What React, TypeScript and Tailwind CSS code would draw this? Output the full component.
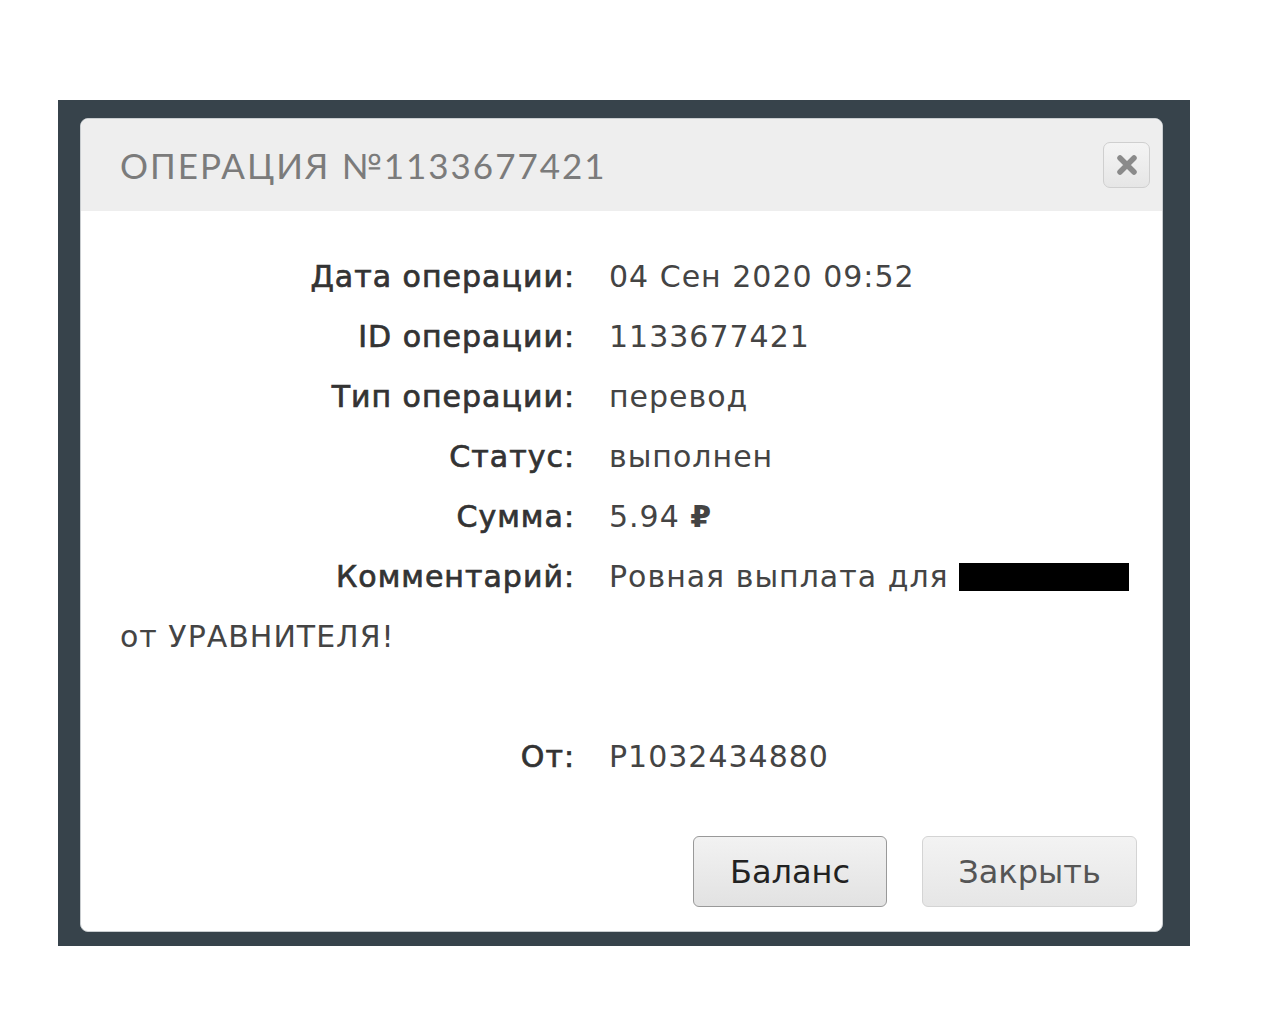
const rows: [string, React.ReactNode][] = [
  ["Дата операции:", "04 Сен 2020 09:52"],
  ["ID операции:", "1133677421"],
  ["Тип операции:", "перевод"],
  ["Статус:", "выполнен"],
  ["Сумма:", <>5.94 <span className="font-bold">₽</span></>],
];

const Label = ({ children }: { children: React.ReactNode }) => (
  <span className="inline-block w-[455px] pr-[34px] box-content text-right text-[#333] [-webkit-text-stroke:0.7px_#333]">
    {children}
  </span>
);

const App = () => {
  return (
    <div className="min-h-[1024px] w-[1280px] bg-white pt-[100px] pl-[58px]">
      <div className="w-[1132px] h-[846px] bg-[#37434b] pt-[18px] pl-[22px]">
        <div className="w-[1083px] h-[814px] bg-white rounded-[8px] border border-[#c9cdd0] overflow-hidden flex flex-col">
          <div className="h-[92px] bg-[#eeeeee] flex items-center justify-between pl-[39px] pr-[12px]">
            <h1 className="text-[35px] tracking-[2px] text-[#7b7b7b] font-['Lato',sans-serif] font-normal">
              ОПЕРАЦИЯ №1133677421
            </h1>
            <button className="w-[47px] h-[46px] rounded-[7px] border border-[#cfcfcf] bg-gradient-to-b from-[#f4f4f4] to-[#e6e6e6] flex items-center justify-center">
              <svg width="22" height="22" viewBox="0 0 22 22">
                <path d="M4 4 L18 18 M18 4 L4 18" stroke="#8a8a8a" strokeWidth="5.5" strokeLinecap="round" />
              </svg>
            </button>
          </div>
          <div className="flex-1 flex flex-col pl-[39px] pt-[36px] text-[30px] tracking-[1px] leading-[60px] text-[#444] font-['DejaVu_Sans',sans-serif]">
            {rows.map(([k, v]) => (
              <div key={k} className="whitespace-nowrap">
                <Label>{k}</Label>
                <span>{v}</span>
              </div>
            ))}
            <div className="whitespace-nowrap">
              <Label>Комментарий:</Label>
              <span>Ровная выплата для </span>
              <span className="inline-block w-[170px] h-[28px] bg-black align-[-4px]" />
            </div>
            <div>от УРАВНИТЕЛЯ!</div>
            <div className="h-[60px]" />
            <div className="whitespace-nowrap">
              <Label>От:</Label>
              <span>P1032434880</span>
            </div>
            <div className="flex justify-end gap-[35px] pr-[25px] mt-[49px] text-[32px] tracking-normal leading-none">
              <button className="w-[194px] h-[71px] rounded-[6px] border border-[#999] bg-gradient-to-b from-[#f2f2f2] to-[#e2e2e2] text-[#222]">
                Баланс
              </button>
              <button className="w-[215px] h-[71px] rounded-[6px] border border-[#d4d4d4] bg-gradient-to-b from-[#f3f3f3] to-[#e6e6e6] text-[#555]">
                Закрыть
              </button>
            </div>
          </div>
        </div>
      </div>
    </div>
  );
};

export default App;
